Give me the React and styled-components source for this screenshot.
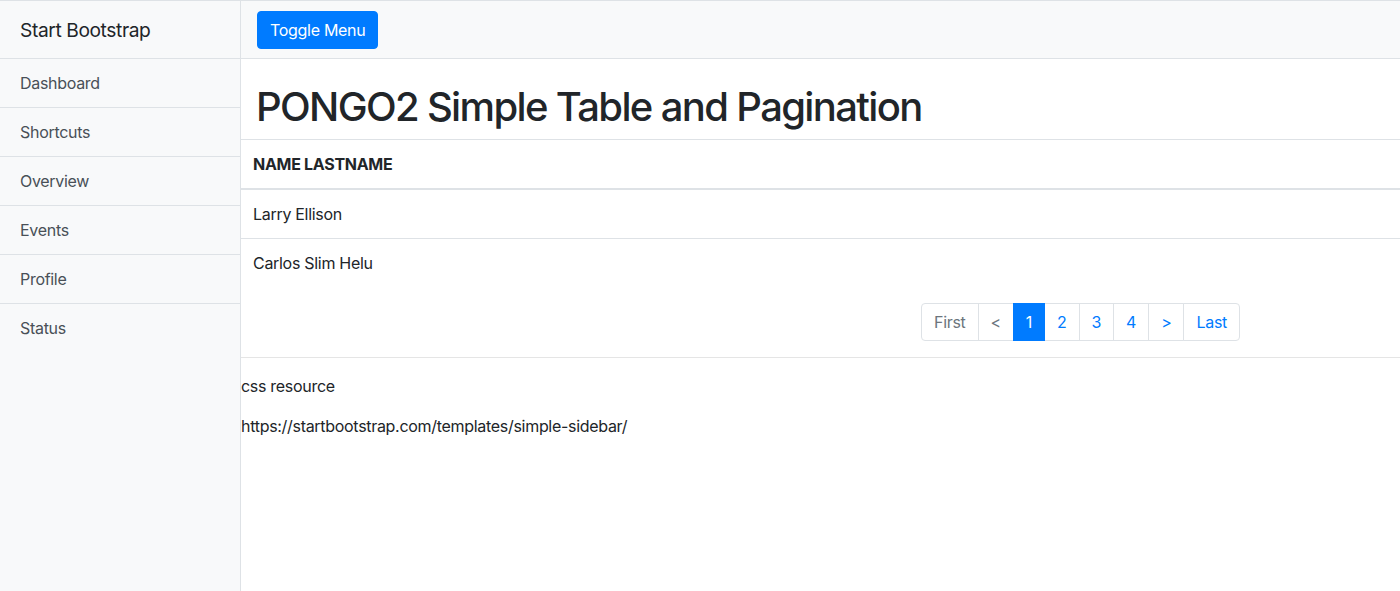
import React from "react";
import styled, { createGlobalStyle } from "styled-components";

const GlobalStyle = createGlobalStyle`
  html, body {
    margin: 0;
    padding: 0;
  }
  body {
    font-family: "Inter", "Liberation Sans", Arial, sans-serif;
    font-size: 16px;
    line-height: 1.5;
    letter-spacing: -0.3px;
    color: #212529;
    background: #fff;
  }
  * {
    box-sizing: border-box;
  }
`;

const menu = ["Dashboard", "Shortcuts", "Overview", "Events", "Profile", "Status"];
const people = ["Larry Ellison", "Carlos Slim Helu"];
const pages = [
  { label: "First", muted: true },
  { label: "<", muted: true },
  { label: "1", active: true },
  { label: "2" },
  { label: "3" },
  { label: "4" },
  { label: ">" },
  { label: "Last" },
];

const App = () => {
  return (
    <>
      <GlobalStyle />
      <Wrapper>
        <Sidebar>
          <SidebarHeading>Start Bootstrap</SidebarHeading>
          <ListGroup>
            {menu.map((item, i) => (
              <ListItem key={item} last={i === menu.length - 1}>
                {item}
              </ListItem>
            ))}
          </ListGroup>
        </Sidebar>
        <Main>
          <Navbar>
            <ToggleButton>Toggle Menu</ToggleButton>
          </Navbar>
          <ContainerFluid>
            <Title>PONGO2 Simple Table and Pagination</Title>
          </ContainerFluid>
          <Table>
            <thead>
              <tr>
                <Th>Name Lastname</Th>
              </tr>
            </thead>
            <tbody>
              {people.map((p) => (
                <tr key={p}>
                  <Td>{p}</Td>
                </tr>
              ))}
            </tbody>
          </Table>
          <PagerRow>
            <Pagination>
              {pages.map((p) => (
                <PageItem key={p.label} active={p.active} muted={p.muted}>
                  {p.label}
                </PageItem>
              ))}
            </Pagination>
          </PagerRow>
          <Divider />
          <Note>css resource</Note>
          <Note>https://startbootstrap.com/templates/simple-sidebar/</Note>
        </Main>
      </Wrapper>
    </>
  );
};

const Wrapper = styled.div`
  display: flex;
  min-height: 591px;
  border-top: 1px solid #dee2e6;
`;

const Sidebar = styled.div`
  width: 241px;
  flex-shrink: 0;
  background-color: #f8f9fa;
  border-right: 1px solid #dee2e6;
`;

const SidebarHeading = styled.div`
  height: 58px;
  padding: 2px 20px 0;
  display: flex;
  align-items: center;
  font-size: 19.2px;
  letter-spacing: -0.4px;
  color: #212529;
  border-bottom: 1px solid #dee2e6;
`;

const ListGroup = styled.div`
  display: flex;
  flex-direction: column;
`;

const ListItem = styled.div`
  padding: 12px 20px;
  color: #495057;
  border-bottom: ${(p) => (p.last ? "none" : "1px solid #dee2e6")};
`;

const Main = styled.div`
  flex: 1;
  min-width: 0;
`;

const Navbar = styled.div`
  height: 58px;
  padding: 10px 16px 9px;
  background-color: #f8f9fa;
  border-bottom: 1px solid #dee2e6;
  display: flex;
  align-items: flex-start;
`;

const ToggleButton = styled.button`
  height: 38px;
  padding: 6px 12px;
  font-family: inherit;
  font-size: 16px;
  line-height: 1.5;
  letter-spacing: -0.3px;
  color: #fff;
  background-color: #007bff;
  border: 1px solid #007bff;
  border-radius: 4px;
`;

const ContainerFluid = styled.div`
  padding: 0 15px;
`;

const Title = styled.h1`
  margin: 24px 0 8px;
  font-size: 40px;
  font-weight: 500;
  line-height: 1.2;
  letter-spacing: -1.65px;
`;

const Table = styled.table`
  width: 100%;
  border-collapse: collapse;
  margin-bottom: 16px;
`;

const Th = styled.th`
  text-align: left;
  padding: 12px;
  font-weight: 700;
  text-transform: uppercase;
  border-top: 1px solid #dee2e6;
  border-bottom: 2px solid #dee2e6;
`;

const Td = styled.td`
  padding: 12px;
  border-top: 1px solid #dee2e6;
`;

const PagerRow = styled.div`
  display: flex;
  padding-left: 680px;
  margin-bottom: 16px;
`;

const Pagination = styled.div`
  display: flex;
`;

const PageItem = styled.div`
  padding: 6px 12px;
  height: 38px;
  line-height: 24px;
  margin-left: -1px;
  color: ${(p) => (p.active ? "#fff" : p.muted ? "#6c757d" : "#007bff")};
  background-color: ${(p) => (p.active ? "#007bff" : "#fff")};
  border: 1px solid ${(p) => (p.active ? "#007bff" : "#dee2e6")};
  position: relative;
  z-index: ${(p) => (p.active ? 1 : 0)};

  &:first-child {
    margin-left: 0;
    border-radius: 4px 0 0 4px;
  }
  &:last-child {
    border-radius: 0 4px 4px 0;
  }
`;

const Divider = styled.hr`
  margin: 0 0 16px;
  border: 0;
  border-top: 1px solid rgba(0, 0, 0, 0.1);
`;

const Note = styled.p`
  margin: 0 0 16px;
`;

export default App;
